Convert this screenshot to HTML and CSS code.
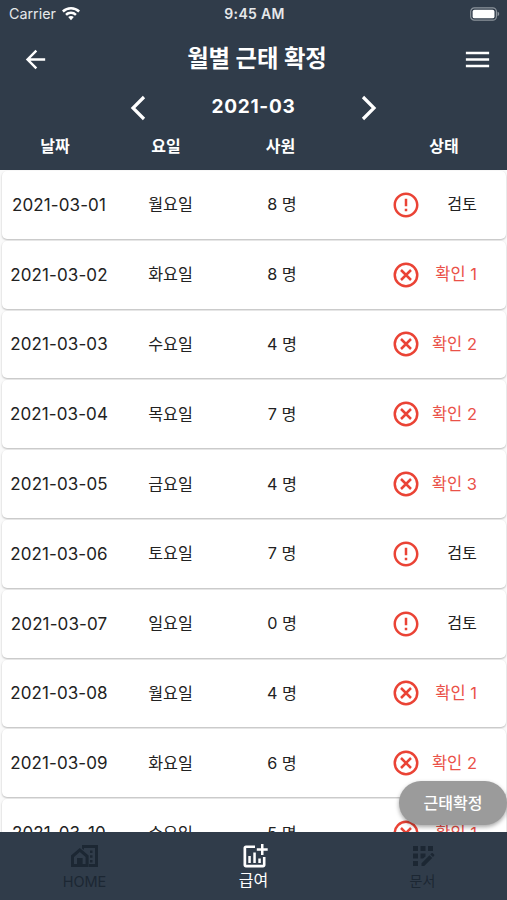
FILE: index.html
```html
<!DOCTYPE html>
<html lang="ko">
<head>
<meta charset="utf-8">
<title>월별 근태 확정</title>
<link rel="stylesheet" href="styles.css">
</head>
<body>
<svg class="defs" aria-hidden="true">
  <symbol id="warn" viewBox="0 0 24 24"><path d="M11 15h2v2h-2zm0-8h2v6h-2zm.99-5C6.47 2 2 6.480 2 12s4.470 10 9.990 10C17.520 22 22 17.520 22 12S17.520 2 11.990 2zM12 20c-4.420 0-8-3.580-8-8s3.580-8 8-8 8 3.580 8 8-3.580 8-8 8z"/></symbol>
  <symbol id="cross" viewBox="0 0 24 24"><circle class="line" cx="12" cy="12" r="9"/><path class="line" d="m8 8 8 8m0-8-8 8"/></symbol>
</svg>
<div class="app">
  <header class="top">
    <div class="status">
      <div class="carrier"><span>Carrier</span>
        <svg class="wifi" viewBox="0 0 18 14"><path d="M9 0C5.600 0 2.400 1.300 0 3.600l1.700 1.800a10.500 10.500 0 0 1 14.600 0L18 3.600A13 13 0 0 0 9 0zM9 4.600c-2.200 0-4.200.8-5.800 2.300l1.700 1.800a6 6 0 0 1 8.200 0l1.700-1.800A8.500 8.500 0 0 0 9 4.600zM9 9c-1.100 0-2 .4-2.800 1.100L9 13.200l2.800-3.100A4 4 0 0 0 9 9z"/></svg>
      </div>
      <div class="clock">9:45 AM</div>
      <svg class="battery" viewBox="0 0 31 14"><rect class="shell" x=".7" y=".7" width="26.600" height="12.600" rx="3.800"/><rect x="2.700" y="2.500" width="22.600" height="9" rx="2"/><path class="cap" d="M28.500 4.700c2.200.6 2.200 4 0 4.600z"/></svg>
    </div>
    <div class="titlebar">
      <svg class="back" viewBox="0 0 24 24"><path d="M20 11H7.830l5.590-5.590L12 4l-8 8 8 8 1.410-1.410L7.830 13H20z"/></svg>
      <h1>월별 근태 확정</h1>
      <svg class="menu" viewBox="0 0 24 24"><path d="M3 18h18v-2H3zm0-5h18v-2H3zm0-7v2h18V6z"/></svg>
    </div>
    <div class="month">
      <svg viewBox="0 0 16 26"><path d="M14 2 3 13l11 11"/></svg>
      <span>2021-03</span>
      <svg viewBox="0 0 16 26"><path d="m2 2 11 11L2 24"/></svg>
    </div>
    <div class="heads"><span>날짜</span><span>요일</span><span>사원</span><span>상태</span></div>
  </header>
  <main class="list">
    <div class="row"><span>2021-03-01</span><span class="ko">월요일</span><span class="ko">8 명</span><svg><use href="#warn"/></svg><span class="ko state">검토</span></div>
    <div class="row"><span>2021-03-02</span><span class="ko">화요일</span><span class="ko">8 명</span><svg><use href="#cross"/></svg><span class="ko state red">확인 1</span></div>
    <div class="row"><span>2021-03-03</span><span class="ko">수요일</span><span class="ko">4 명</span><svg><use href="#cross"/></svg><span class="ko state red">확인 2</span></div>
    <div class="row"><span>2021-03-04</span><span class="ko">목요일</span><span class="ko">7 명</span><svg><use href="#cross"/></svg><span class="ko state red">확인 2</span></div>
    <div class="row"><span>2021-03-05</span><span class="ko">금요일</span><span class="ko">4 명</span><svg><use href="#cross"/></svg><span class="ko state red">확인 3</span></div>
    <div class="row"><span>2021-03-06</span><span class="ko">토요일</span><span class="ko">7 명</span><svg><use href="#warn"/></svg><span class="ko state">검토</span></div>
    <div class="row"><span>2021-03-07</span><span class="ko">일요일</span><span class="ko">0 명</span><svg><use href="#warn"/></svg><span class="ko state">검토</span></div>
    <div class="row"><span>2021-03-08</span><span class="ko">월요일</span><span class="ko">4 명</span><svg><use href="#cross"/></svg><span class="ko state red">확인 1</span></div>
    <div class="row"><span>2021-03-09</span><span class="ko">화요일</span><span class="ko">6 명</span><svg><use href="#cross"/></svg><span class="ko state red">확인 2</span></div>
    <div class="row"><span>2021-03-10</span><span class="ko">수요일</span><span class="ko">5 명</span><svg><use href="#cross"/></svg><span class="ko state red">확인 1</span></div>
    <button class="confirm">근태확정</button>
  </main>
  <nav class="tabs">
    <div class="tab">
      <svg viewBox="0 0 28 24"><path d="M11 1h16v22h-9v-3h6V4H13v2l-2-1.500z"/><path fill-rule="evenodd" d="M0 11.500 8.800 4l8.800 7.500V23H0zM3 13v7h3v-6h5.600v6h3v-7L8.800 8z"/><path d="M19 6.500h2.500V9H19zm0 4.700h2.500v2.500H19zm0 4.700h2.500v2.500H19z"/></svg>
      <span class="home">HOME</span>
    </div>
    <div class="tab active">
      <svg viewBox="0 0 28 24"><path d="M15 1.500v2.600H6.200v16.700h16.700V13h2.600v8c0 1.500-1 2.500-2.500 2.500H6C4.500 23.500 3.500 22.500 3.500 21V4c0-1.500 1-2.500 2.500-2.500zM8.300 12h2.500v7H8.300zm5-3.500h2.500V19h-2.500zm5 6h2.500V19h-2.500zM21 0h2.500v4.200h4.200v2.500h-4.200v4.200H21V6.700h-4.200V4.200H21z"/></svg>
      <span>급여</span>
    </div>
    <div class="tab">
      <svg viewBox="0 0 28 24"><path d="M4 2h5v5H4zm7.500 0h5v5h-5zM19 2h5v5h-5zM4 9.500h5v5H4zm7.500 0h5v3l-2.500 2h-2.500zM4 17h5v5H4zm8.500 2.200 8-8 2.700 2.700-8 8h-2.700zM21.300 10.400l1.200-1.200c.4-.4.900-.4 1.300 0l1.300 1.300c.4.4.4.900 0 1.300l-1.100 1.300z"/></svg>
      <span>문서</span>
    </div>
  </nav>
</div>
</body>
</html>
```

FILE: styles.css
```css
* { box-sizing: border-box; }
body {
  margin: 0;
  font-family: Inter, "Noto Sans CJK KR", sans-serif;
  color: #222;
}
.defs { position: absolute; width: 0; height: 0; }
.app {
  width: 507px;
  height: 900px;
  display: flex;
  flex-direction: column;
  overflow: hidden;
  background: #fafafa;
}
.top { height: 170px; flex: none; background: #303c4a; color: #fff; }
.top svg { fill: #fff; }
.status {
  height: 27px;
  padding: 0 7px 0 9px;
  display: grid;
  grid-template-columns: 1fr auto 1fr;
  align-items: center;
  font-size: 14.3px;
  color: #e6e8ea;
}
.carrier { display: flex; align-items: center; gap: 6px; }
.wifi { width: 18px; height: 14px; }
.clock { font-size: 14px; font-weight: 600; letter-spacing: .3px; }
.battery { width: 30px; height: 14px; justify-self: end; }
.battery .shell { fill: none; stroke: #8c949c; stroke-width: 1.2; }
.battery .cap { fill: #8c949c; }
.titlebar {
  height: 64px;
  padding: 0 14px 0 21px;
  display: flex;
  align-items: center;
  justify-content: space-between;
}
h1 { margin: 0 0 0 2px; font-size: 23.3px; line-height: 30px; font-weight: 700; }
.back { width: 29px; height: 29px; }
.menu { width: 31px; height: 31px; }
.month {
  height: 34px;
  display: flex;
  align-items: center;
  justify-content: center;
  gap: 66px;
  font-size: 19px;
  font-weight: 700;
}
.month span { line-height: 30px; margin-bottom: 2px; letter-spacing: .7px; }
.month svg { width: 16px; height: 26px; }
.month path { fill: none; stroke: #fff; stroke-width: 3.2; }
.heads {
  height: 40px;
  display: grid;
  grid-template-columns: 110px 112px 117px 1fr;
  align-items: center;
  text-align: center;
  font-size: 16px;
  font-weight: 700;
}
.heads span:last-child { padding-left: 42px; }
.list { flex: 1; min-height: 0; overflow: hidden; position: relative; padding: 1px 1px 0 2px; }
.row {
  height: 67.8px;
  margin-bottom: 2px;
  display: grid;
  grid-template-columns: 114px 109px 114px 52px 27px 59px;
  align-items: center;
  text-align: center;
  background: #fff;
  border-radius: 5px;
  box-shadow: 0 1px 2px rgba(0, 0, 0, .26);
  font-size: 17px;
}
.row span { white-space: nowrap; letter-spacing: .1px; }
.row .ko { font-size: 16.2px; padding-bottom: 3px; letter-spacing: 0; }
.row svg { grid-column: 5; width: 30px; height: 30px; fill: #ea4335; }
.line { fill: none; stroke: #ea4335; stroke-width: 2; }
.row .state { grid-column: 6; text-align: right; }
.row .red { color: #ea5148; font-size: 16.5px; }
.confirm {
  position: absolute;
  right: 0;
  bottom: 7px;
  width: 108px;
  height: 44px;
  padding: 0 0 3px;
  border: 0;
  border-radius: 22px;
  background: #9b9b9b;
  color: #fff;
  font: 500 16px Inter, "Noto Sans CJK KR", sans-serif;
  box-shadow: 0 2px 4px rgba(0, 0, 0, .35);
}
.tabs {
  height: 68px;
  flex: none;
  display: grid;
  grid-template-columns: repeat(3, 1fr);
  background: #303c4a;
}
.tab {
  display: flex;
  flex-direction: column;
  align-items: center;
  padding-top: 12px;
  color: #1c2733;
  font-size: 14px;
}
.tab svg { width: 28px; height: 24px; fill: currentColor; }
.tab span { line-height: 25px; }
.tab .home { font-size: 14.5px; line-height: 27px; }
.active { color: #fff; font-size: 16px; }
```
